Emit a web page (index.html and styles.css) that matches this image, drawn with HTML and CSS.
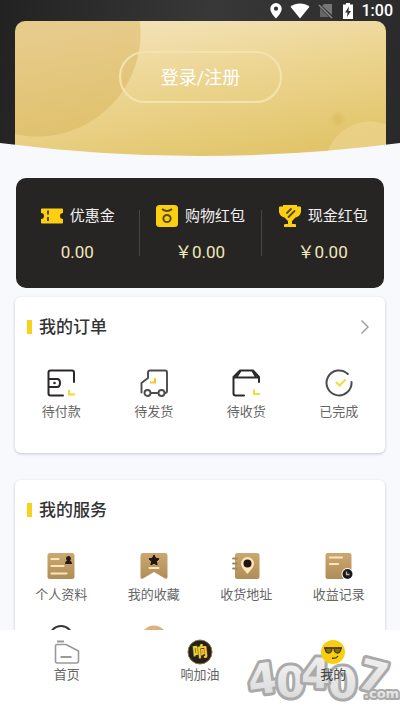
FILE: index.html
```html
<!DOCTYPE html>
<html lang="zh-CN">
<head>
<meta charset="utf-8">
<meta name="viewport" content="width=device-width, initial-scale=1">
<title>我的</title>
<link rel="stylesheet" href="styles.css">
</head>
<body>
<svg class="defs" aria-hidden="true">
  <defs>
    <linearGradient id="tan" x1="0" y1="0" x2="0" y2="1">
      <stop offset="0" stop-color="#cba870"/><stop offset="1" stop-color="#b08d58"/>
    </linearGradient>
    <linearGradient id="silver" x1="0" y1="0" x2="0" y2="1">
      <stop offset="0" stop-color="#f4f4f4"/><stop offset="1" stop-color="#d6d6d6"/>
    </linearGradient>
  </defs>
</svg>

<header class="hero">
  <div class="status">
    <svg width="12" height="16" viewBox="0 0 12 16"><path fill="#fff" fill-rule="evenodd" d="M6 0a5.700 5.700 0 0 1 5.700 5.700C11.700 10 6 15.500 6 15.500S.3 10 .3 5.700A5.700 5.700 0 0 1 6 0zm0 3.600a2.100 2.100 0 1 0 0 4.200 2.100 2.100 0 0 0 0-4.200z"/></svg>
    <svg width="20" height="16" viewBox="0 0 20 16"><path fill="#fff" d="M.5 3.800C6-.6 14-.6 19.500 3.800L10 15.500z"/></svg>
    <svg width="16" height="16" viewBox="0 0 16 16"><path fill="#777" d="M6 1h8v11L4 3z"/><path fill="#666" d="M2 5l9 9H2z"/><path stroke="#888" stroke-width="1.500" d="M1 2l13 13"/></svg>
    <svg width="12" height="16" viewBox="0 0 12 16"><path fill="#fff" d="M4 0h4v1.500h3V16H1V1.500h3z"/><path fill="#333" d="M7 3.500L3 9.500h2.500L5 14l4-6H6.500z"/></svg>
    <time>1:00</time>
  </div>
  <div class="member">
    <button class="login" type="button">登录/注册</button>
  </div>
  <svg class="curve" viewBox="0 0 400 14" preserveAspectRatio="none"><path fill="#f8f9fd" d="M0 0Q200 26 400 0V14H0z"/></svg>
</header>

<main class="content">
  <section class="wallet">
    <a class="asset" href="#coupon">
      <span class="asset-name">
        <svg width="24" height="24" viewBox="0 0 24 24"><path fill="#fccf12" d="M2 4.500h20q1 0 1 1v3.500a3 3 0 0 0 0 6v3.500q0 1-1 1H2q-1 0-1-1V15a3 3 0 0 0 0-6V5.500q0-1 1-1z"/><path stroke="#574b13" stroke-width="2" stroke-dasharray="4 2.500" d="M8 6.500v12"/></svg>
        优惠金</span>
      <span class="asset-value">0.00</span>
    </a>
    <a class="asset" href="#shopping">
      <span class="asset-name">
        <svg width="24" height="24" viewBox="0 0 24 24"><rect x="1" y="1" width="22" height="22" rx="3.500" fill="#fccf12"/><g fill="none" stroke="#574b13" stroke-width="2"><path d="M7 5q5 4 10 0"/><circle cx="12" cy="14.500" r="3.600"/></g></svg>
        购物红包</span>
      <span class="asset-value">￥0.00</span>
    </a>
    <a class="asset" href="#cash">
      <span class="asset-name">
        <svg width="24" height="24" viewBox="0 0 24 24"><path fill="#fccf12" d="M5 1h14v1.500h3q1 0 1 1V8q-1 4.500-5.500 5.500L14 17v3h3q1 0 1 1v2H6v-2q0-1 1-1h3v-3l-3.500-3.500Q2 12.500 1 8V3.500q0-1 1-1h3z"/><path stroke="#574b13" stroke-width="1.800" stroke-linecap="round" d="M9 9l4-4M10.500 13l6-6"/></svg>
        现金红包</span>
      <span class="asset-value">￥0.00</span>
    </a>
  </section>

  <section class="card orders">
    <div class="card-head">
      <h2>我的订单</h2>
      <a href="#orders" aria-label="全部订单"><svg width="10" height="16" viewBox="0 0 10 16"><path fill="none" stroke="#999" stroke-width="1.400" d="M1.500 1.500L8 8l-6.500 6.500"/></svg></a>
    </div>
    <nav class="grid">
      <a href="#pay"><svg width="28" height="28" viewBox="0 0 28 28"><g fill="none" stroke="#2b2726" stroke-width="2" stroke-linecap="round" stroke-linejoin="round"><path d="M27 13V3.500q0-2-2-2H3.500q-2 0-2 2v21q0 2 2 2H16M1.500 10H10q3 0 3 4t-3 4H1.500"/></g><circle cx="7.500" cy="14" r="1.300" fill="#2b2726"/><path fill="none" stroke="#f4d92c" stroke-width="2" d="M22 21v4.500h6"/></svg><span>待付款</span></a>
      <a href="#ship"><svg width="28" height="28" viewBox="0 0 28 28"><g fill="none" stroke="#4c4c50" stroke-width="1.900" stroke-linecap="round" stroke-linejoin="round"><path d="M1.500 23.500V14L8 9V3.500q0-2 2-2h15q2 0 2 2V22q0 2-2 2M11.500 24h6"/><circle cx="7.500" cy="24" r="3"/><circle cx="21.500" cy="24" r="3"/></g><path fill="none" stroke="#f6c72e" stroke-width="2" d="M10 13.500h5V9"/></svg><span>待发货</span></a>
      <a href="#receive"><svg width="28" height="28" viewBox="0 0 28 28"><g fill="none" stroke="#2b2b2c" stroke-width="2" stroke-linecap="round" stroke-linejoin="round"><path d="M27 13V8l-6-6.500H8L1.500 8v16.500q0 2 2 2H12M1.500 8.500H27M8.500 2l-4 6M20.500 2l3.500 6"/></g><path fill="none" stroke="#f1dc39" stroke-width="2" d="M22 20.500V25h6"/></svg><span>待收货</span></a>
      <a href="#done"><svg width="28" height="28" viewBox="0 0 28 28"><path fill="none" stroke="#4c4c50" stroke-width="2" stroke-linecap="round" d="M22.800 5A12.500 12.500 0 1 0 26.500 13"/><path fill="none" stroke="#f1dc39" stroke-width="2" d="M11 13l3.500 3.500 6-6"/></svg><span>已完成</span></a>
    </nav>
  </section>

  <section class="card services">
    <div class="card-head"><h2>我的服务</h2></div>
    <nav class="grid">
      <a href="#profile"><svg width="28" height="28" viewBox="0 0 28 28"><rect x=".5" y="1" width="27" height="26" rx="2.500" fill="url(#tan)"/><path stroke="#ffe6ba" stroke-width="2.200" stroke-linecap="round" d="M4.500 7h7M4.500 14h12M4.500 21.500h15"/><path fill="#241a12" d="M21.500 4a2.500 2.500 0 0 1 1.500 4.500Q25 9 25 12h-7q0-3 2-3.500A2.500 2.500 0 0 1 21.500 4z"/></svg><span>个人资料</span></a>
      <a href="#favorites"><svg width="28" height="28" viewBox="0 0 28 28"><path fill="url(#tan)" d="M3 1h22q2.500 0 2.500 2.500V25q0 2.500-2.500 1.500L14 20 3 26.500Q.5 27.500.5 25V3.500Q.5 1 3 1z"/><path fill="#1e1610" stroke="#1e1610" stroke-linejoin="round" d="M14 3l1.600 3.300 3.400.5-2.500 2.500.6 3.600-3.100-1.700-3.100 1.700.6-3.600L9 6.800l3.400-.5z"/><path stroke="#ffe6ba" stroke-width="2" stroke-linecap="round" d="M9.500 16h9"/></svg><span>我的收藏</span></a>
      <a href="#address"><svg width="28" height="28" viewBox="0 0 28 28"><rect x="3" y="1" width="24.500" height="26" rx="2.500" fill="url(#tan)"/><path stroke="#a5865a" stroke-width="1.800" stroke-linecap="round" d="M1 6.500h4M1 11.500h4M1 16.500h4"/><path fill="#ffe6ba" d="M15.500 5a6.500 6.500 0 0 1 6.500 6.500c0 4-4 7-6.500 10.500C13 18.500 9 15.500 9 11.500A6.500 6.500 0 0 1 15.500 5z"/><circle cx="15.500" cy="11.500" r="4" fill="#1e1610"/></svg><span>收货地址</span></a>
      <a href="#income"><svg width="28" height="28" viewBox="0 0 28 28"><rect x=".5" y="1" width="26" height="26" rx="2" fill="url(#tan)"/><path stroke="#ffe6ba" stroke-width="2.200" stroke-linecap="round" d="M5 5.500h12M5 12h8"/><circle cx="22.500" cy="22" r="6" fill="#fff"/><circle cx="22.500" cy="22" r="5" fill="#1d1a1c"/><path fill="none" stroke="#c9b59a" stroke-width="1.300" d="M21.500 19.500v3h3"/></svg><span>收益记录</span></a>
      <a href="#support" aria-label="客服"><svg width="28" height="28" viewBox="0 0 28 28"><circle cx="14" cy="12.500" r="11.500" fill="none" stroke="#37373a" stroke-width="2"/></svg></a>
      <a href="#about" aria-label="关于"><svg width="28" height="28" viewBox="0 0 28 28"><circle cx="14" cy="13.500" r="13" fill="#d9b27c"/></svg></a>
    </nav>
  </section>
</main>

<footer class="tabs">
  <svg class="watermark" width="160" height="58" viewBox="0 0 160 58">
    <text x="8" y="42" transform="rotate(-8 20 28)">4</text>
    <text x="88" y="46">0</text>
    <text x="36" y="45">0</text>
    <text x="61" y="36" transform="rotate(2 72 28)">4</text>
    <text x="117" y="38" transform="rotate(14 128 30)">7</text>
    <text class="mark-small" x="124" y="46">.com</text>
  </svg>
  <a href="#home"><svg width="26" height="26" viewBox="0 0 26 26"><path fill="none" stroke="#999" stroke-width="1.600" stroke-linejoin="round" d="M3 5.500h9L24.500 12v10q0 2-2 2H3q-1.500 0-1.500-2V7Q1.500 5.500 3 5.500z"/><path stroke="#999" stroke-width="1.800" d="M3 2.500h7M6.500 18h11"/></svg><span>首页</span></a>
  <a href="#fuel"><svg width="26" height="26" viewBox="0 0 26 26"><circle cx="13" cy="13" r="12" fill="#24201d" stroke="#8e7430"/><text class="logo-char" x="13" y="18" text-anchor="middle" transform="rotate(-6 13 13)">响</text></svg><span>响加油</span></a>
  <a href="#me" aria-current="page"><svg width="26" height="26" viewBox="0 0 26 26"><circle cx="13" cy="13" r="12" fill="#f8ce12"/><path fill="#8b7010" stroke="#4e400b" stroke-width="1.400" d="M5 9h7l-.5 3q-1 2-3 2-2.500 0-3-3zM14 9h7l-.5 2.500q-1 2.500-3 2.500-2 0-3-2z"/><path fill="none" stroke="#4e400b" stroke-width="1.300" d="M4 9h18M12 19q4 1 6-2"/></svg><span>我的</span></a>
</footer>
</body>
</html>
```
FILE: styles.css
```css
* {
  box-sizing: border-box;
}

body {
  display: flex;
  flex-direction: column;
  height: 100vh;
  margin: 0;
  overflow: hidden;
  background: #f8f9fd;
  color: #333;
  font-family: Roboto, "Noto Sans CJK SC", sans-serif;
}

a {
  color: inherit;
  text-decoration: none;
}

svg {
  display: block;
  flex: none;
}

.defs {
  position: absolute;
  width: 0;
  height: 0;
}

/* Header */
.hero {
  position: relative;
  flex: none;
  padding: 0 14px 0 15px;
  background: linear-gradient(100deg, #222, #383838 50%, #292929);
}

.status {
  display: flex;
  align-items: center;
  justify-content: flex-end;
  gap: 8px;
  height: 21px;
  margin-right: -7px;
  color: #fff;
  font-size: 16px;
  font-weight: 500;
}

.member {
  display: flex;
  justify-content: center;
  padding: 30px 0 54px;
  border-radius: 10px 10px 0 0;
  background:
    radial-gradient(circle at 22px 12px, #d9b45c80 103px, transparent 104px),
    radial-gradient(circle at 323px 98px, #d9b95a99 3px, transparent 8px),
    radial-gradient(circle at 355px 145px, #efd99a80 44px, transparent 45px),
    linear-gradient(170deg, #f4e2b8 10%, #ecd591 45%, #e2c56b 88%);
}

.login {
  height: 52px;
  padding: 0 40px 3px;
  border: 2px solid #f4e2b0;
  border-radius: 26px;
  background: none;
  color: #fff;
  font: inherit;
  font-size: 18px;
}

.curve {
  position: absolute;
  bottom: 0;
  left: 0;
  width: 100%;
  height: 14px;
}

/* Page body */
.content {
  flex: 1;
  min-height: 0;
  padding: 21px 15px 0;
  overflow: hidden;
}

.wallet {
  display: grid;
  grid-template-columns: repeat(3, 1fr);
  margin: 0 1px;
  padding: 26px 0 24px;
  border-radius: 10px;
  background: #272523;
}

.asset {
  display: flex;
  flex-direction: column;
  align-items: center;
  gap: 12px;
  height: 60px;
  color: #f0e8bd;
}

.asset + .asset {
  background: linear-gradient(#484644, #484644) 0 6px / 1px 46px no-repeat;
}

.asset-name {
  display: flex;
  align-items: center;
  gap: 6px;
  color: #f2f2f2;
  font-size: 15px;
  line-height: 24px;
}

.asset-value {
  font-size: 17px;
  line-height: 24px;
}

.card {
  border-radius: 6px;
  background: #fff;
  box-shadow: 0 1px 3px #c3c6d0;
}

.orders {
  margin: 9px 0 27px;
  padding-bottom: 31px;
}

.card-head {
  display: flex;
  align-items: center;
  justify-content: space-between;
  padding: 18px 15px 0 12px;
}

h2 {
  display: flex;
  align-items: center;
  gap: 7px;
  margin: 0;
  font-size: 17px;
  font-weight: 500;
  line-height: 24px;
}

h2::before {
  width: 5px;
  height: 14px;
  background: #f6d21b;
  content: "";
}

.grid {
  display: grid;
  grid-template-columns: repeat(4, 1fr);
  gap: 20px 0;
  padding-top: 30px;
}

.grid a {
  display: flex;
  flex-direction: column;
  align-items: center;
  gap: 5px;
  color: #666;
  font-size: 13px;
  line-height: 20px;
}

/* Bottom tabs */
.tabs {
  position: relative;
  display: grid;
  flex: none;
  grid-template-columns: repeat(3, 1fr);
  height: 80px;
  padding-top: 9px;
  background: #fff;
}

.tabs a {
  position: relative;
  display: flex;
  flex-direction: column;
  align-items: center;
  color: #666;
  font-size: 13px;
  line-height: 20px;
}

.tabs a[aria-current] {
  color: #444;
}

.logo-char {
  fill: #f3cf2e;
  font-size: 15px;
  font-weight: 900;
}

/* Site mark in the bottom corner */
.watermark {
  position: absolute;
  right: 0;
  bottom: 0;
  fill: url(#silver);
  stroke: #aaa;
  stroke-width: 6px;
  stroke-linejoin: round;
  paint-order: stroke;
  font-family: "DejaVu Sans", sans-serif;
  font-size: 42px;
  font-weight: 700;
}

.mark-small {
  stroke-width: 4px;
  font-size: 13px;
}
```
